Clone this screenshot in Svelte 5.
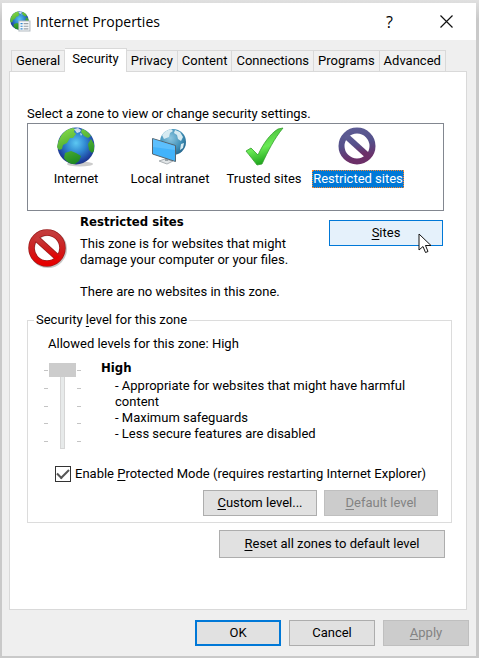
<script>
  const tabs = ["General", "Security", "Privacy", "Content", "Connections", "Programs", "Advanced"];
  const zones = [
    { id: "internet", name: "Internet" },
    { id: "intranet", name: "Local intranet" },
    { id: "trusted", name: "Trusted sites" },
    { id: "restricted", name: "Restricted sites" },
  ];

  let activeTab = "Security";
  let activeZone = "restricted";
  let level = 4;
  let protectedMode = true;
</script>

<svg class="defs" width="0" height="0" aria-hidden="true">
  <defs>
    <radialGradient id="sea" cx="0.5" cy="0.42" r="0.6">
      <stop offset="0" stop-color="#5cc8f2" />
      <stop offset="0.45" stop-color="#2f86d0" />
      <stop offset="0.85" stop-color="#1e3f9c" />
      <stop offset="1" stop-color="#1b2f78" />
    </radialGradient>
    <radialGradient id="pale" cx="0.4" cy="0.35" r="0.7">
      <stop offset="0" stop-color="#8cc6e0" />
      <stop offset="0.6" stop-color="#4393ba" />
      <stop offset="1" stop-color="#24658c" />
    </radialGradient>
    <linearGradient id="land" x1="0" y1="0" x2="0.4" y2="1">
      <stop offset="0" stop-color="#8ee04a" />
      <stop offset="1" stop-color="#1f8a22" />
    </linearGradient>
    <linearGradient id="tick" x1="0" y1="0" x2="0.3" y2="1">
      <stop offset="0" stop-color="#3fae35" />
      <stop offset="0.6" stop-color="#6aea55" />
      <stop offset="1" stop-color="#1fa51c" />
    </linearGradient>
    <linearGradient id="red" x1="0" y1="0" x2="0" y2="1">
      <stop offset="0" stop-color="#c43c3c" />
      <stop offset="0.5" stop-color="#cc2020" />
      <stop offset="1" stop-color="#e60000" />
    </linearGradient>
    <linearGradient id="purple" x1="0" y1="0" x2="0.2" y2="1">
      <stop offset="0" stop-color="#5d5c94" />
      <stop offset="0.5" stop-color="#54508a" />
      <stop offset="1" stop-color="#6c2f68" />
    </linearGradient>
    <symbol id="globe" viewBox="0 0 38 38">
      <circle cx="19" cy="19" r="18.5" fill="url(#sea)" />
      <path fill="url(#land)" d="M3 11C5 6 10 2 16 1l2 1-1 3 2 2-3 4-3 0-3 5-4 2-1 4-3 1-2-3C1 17 1 14 3 11zM25 2c4 1 7 4 9 7l-3 2-4-2-3-4zM34 12l3 5v7l-2 2-3-3-1-6zM8 26l6-2 5 2 5 3-2 5-4 3c-5 0-8-2-11-6z" />
      <path fill="#fff" opacity="0.75" d="M17 2l4-1 3 2-1 2-3 1zM23 6l2 1-1 2z" />
    </symbol>
    <symbol id="ban" viewBox="0 0 38 38">
      <circle cx="19" cy="19" r="15.5" />
      <path d="M8 9l22 20" />
    </symbol>
  </defs>
</svg>

<div class="desktop">
  <main class="window">
    <header class="titlebar">
      <svg class="app-icon" viewBox="0 0 20 20" aria-hidden="true">
        <use href="#globe" width="18" height="18" />
        <path d="M8.500 9.500h10.500v9.500H8.500z" fill="#f6f8fa" stroke="#b4bcc2" />
        <path d="M10 12h2M10 14.500h2M10 17h2" stroke="#2f86d0" />
        <path d="M13 12h4.500M13 14.500h4.500M13 17h4.500" stroke="#98a0a8" />
      </svg>
      <h1>Internet Properties</h1>
      <button class="caption" aria-label="Help">?</button>
      <button class="caption" aria-label="Close">
        <svg width="13" height="13" viewBox="0 0 13 13"><path d="M.5.5l12 12M12.500.5l-12 12" stroke="#111" stroke-width="1.200" /></svg>
      </button>
    </header>

    <div class="content">
      <div class="tabs" role="tablist">
        {#each tabs as tab}
          <button
            class="tab"
            class:active={tab === activeTab}
            role="tab"
            aria-selected={tab === activeTab}
            on:click={() => (activeTab = tab)}>{tab}</button>
        {/each}
      </div>

      <section class="panel">
        <p class="prompt">Select a zone to view or change security settings.</p>

        <div class="zones" role="listbox" aria-label="Zones">
          {#each zones as zone}
            <button
              class="zone"
              class:selected={zone.id === activeZone}
              role="option"
              aria-selected={zone.id === activeZone}
              on:click={() => (activeZone = zone.id)}>
              <svg width="40" height="40" viewBox="0 0 40 40" aria-hidden="true">
                {#if zone.id === "internet"}
                  <ellipse cx="24" cy="37" rx="13" ry="2.500" fill="#ccc" />
                  <use href="#globe" x="1" y="0" width="38" height="38" />
                {:else if zone.id === "intranet"}
                  <circle cx="23" cy="15" r="13" fill="url(#pale)" />
                  <path fill="#d6ebf2" d="M12 8c2-3 5-5 9-6l2 2-3 2-1 4-5 2zM25 3l5 2 3 5-2 4-3-2-1-4-3-2zM31 17l3-1-1 5-3 2z" />
                  <path d="M9 34l6-2 8 2-6 3z" fill="#e1e5e7" stroke="#aab0b4" />
                  <path d="M15 29l3 1v4h-3z" fill="#9ba3a8" />
                  <path d="M2.500 11.500l23 7v16l-23-7.500z" fill="#42b3fb" stroke="#56656f" />
                  <path d="M3 12l22 7v4L3 20z" fill="#75cbff" opacity="0.500" />
                {:else if zone.id === "trusted"}
                  <path d="M2 24l5-3 7 7C19 17 26 7 34 2l5-1C30 12 24 24 18 37l-5 1C10 34 6 29 2 24z" fill="url(#tick)" stroke="#35a02d" stroke-width="0.800" />
                {:else}
                  <g fill="none" stroke="url(#purple)" stroke-width="6"><use href="#ban" x="0" y="0" width="38" height="38" /></g>
                {/if}
              </svg>
              <span>{zone.name}</span>
            </button>
          {/each}
        </div>

        <div class="details">
          <svg class="zone-icon" width="40" height="40" viewBox="0 0 40 40" aria-hidden="true">
            <circle cx="21" cy="21" r="16" fill="none" stroke="#c8c8c8" stroke-width="6" />
            <g fill="none" stroke="#9c1c1c" stroke-width="6.500"><use href="#ban" x="1" y="1" width="38" height="38" /></g>
            <g fill="none" stroke="url(#red)" stroke-width="5"><use href="#ban" x="1" y="1" width="38" height="38" /></g>
          </svg>
          <div class="description">
            <h2>Restricted sites</h2>
            <p>This zone is for websites that might damage your computer or your files.</p>
            <p>There are no websites in this zone.</p>
          </div>
          <div class="sites">
            <button class="btn hot"><u>S</u>ites</button>
            <svg class="pointer" width="14" height="21" viewBox="0 0 14 21" aria-hidden="true">
              <path d="M1 1v16l4-3.500 2.500 6 2.500-1-2.500-6H13z" fill="#fff" stroke="#111" />
            </svg>
          </div>
        </div>

        <fieldset>
          <legend>Security <u>l</u>evel for this zone</legend>
          <p class="allowed">Allowed levels for this zone: High</p>
          <div class="level">
            <div class="slider">
              <div class="ticks">{#each Array(5) as _}<i></i>{/each}</div>
              <input type="range" min="0" max="4" bind:value={level} disabled aria-label="Security level" />
              <div class="ticks">{#each Array(5) as _}<i></i>{/each}</div>
            </div>
            <div class="level-text">
              <h2>High</h2>
              <p>- Appropriate for websites that might have harmful content</p>
              <p>- Maximum safeguards</p>
              <p>- Less secure features are disabled</p>
            </div>
          </div>
          <label class="check">
            <input type="checkbox" bind:checked={protectedMode} />
            <span>Enable <u>P</u>rotected Mode (requires restarting Internet Explorer)</span>
          </label>
          <div class="row">
            <button class="btn"><u>C</u>ustom level...</button>
            <button class="btn" disabled><u>D</u>efault level</button>
          </div>
        </fieldset>

        <div class="row reset">
          <button class="btn wide"><u>R</u>eset all zones to default level</button>
        </div>
      </section>
    </div>

    <footer>
      <button class="btn default">OK</button>
      <button class="btn">Cancel</button>
      <button class="btn" disabled><u>A</u>pply</button>
    </footer>
  </main>
</div>

<style>
  :global(body) {
    background: #c9c9c9;
  }

  * {
    box-sizing: border-box;
  }

  .defs {
    position: absolute;
  }

  .desktop {
    padding: 3px 3px 2px 2px;
    background: linear-gradient(#e0e0e0, #c9c9c9 20px);
    font-family: Roboto, Tahoma, sans-serif;
    font-size: 13px;
    line-height: 16px;
    color: #000;
  }

  .window {
    background: #efefef;
  }

  button {
    font: inherit;
    color: inherit;
    padding: 0;
    border: 0;
    background: none;
    white-space: nowrap;
  }

  h1,
  h2,
  p {
    margin: 0;
  }

  h2 {
    font: bold 13px/16px "DejaVu Sans Condensed", Tahoma, sans-serif;
  }

  u {
    text-underline-offset: 2px;
  }

  .titlebar {
    display: flex;
    align-items: center;
    height: 37px;
    padding: 0 1px 0 8px;
    background: #fff;
  }

  .app-icon {
    width: 21px;
    height: 21px;
  }

  h1 {
    flex: 1;
    margin-left: 5px;
    font: 14px/20px "Open Sans", "Segoe UI", sans-serif;
  }

  .caption {
    display: flex;
    align-items: center;
    justify-content: center;
    width: 57px;
    height: 37px;
    font: 16px/20px "Open Sans", "Segoe UI", sans-serif;
  }

  .content {
    padding: 8px 9px 0 7px;
  }

  .tabs {
    display: flex;
    align-items: flex-end;
    padding-left: 2px;
  }

  .tab {
    height: 21px;
    padding: 0 4px;
    border: 1px solid #d9d9d9;
    border-width: 1px 1px 0 0;
    background: #f0f0f0;
  }

  .tab:first-child {
    border-left-width: 1px;
  }

  .tab.active {
    height: 24px;
    margin-bottom: -1px;
    padding: 0 7px 3px;
    background: #fff;
  }

  .panel {
    padding: 34px 14px 51px 17px;
    border: 1px solid #d9d9d9;
    background: #fff;
  }

  .prompt {
    margin-bottom: 1px;
  }

  .zones {
    display: flex;
    height: 88px;
    margin-right: 8px;
    padding: 3px 1px;
    border: 1px solid #828790;
  }

  .zone {
    display: flex;
    flex-direction: column;
    align-items: center;
    gap: 3px;
    width: 94px;
  }

  .zone span {
    border: 1px solid transparent;
  }

  .zone.selected span {
    border: 1px dotted #ff8728;
    background: #0078d7;
    color: #fff;
  }

  .details {
    display: flex;
    padding-top: 3px;
  }

  .zone-icon {
    margin: 14px 13px 0 0;
  }

  .description {
    flex: 1;
  }

  .description h2 {
    margin-bottom: 6px;
  }

  .description p + p {
    margin-top: 16px;
  }

  .sites {
    position: relative;
    margin: 6px 9px 0 24px;
  }

  .btn {
    width: 114px;
    height: 26px;
    border: 1px solid #adadad;
    background: #e1e1e1;
  }

  .btn:disabled {
    border-color: #bfbfbf;
    background: #ccc;
    color: #838383;
  }

  .btn.hot {
    border-color: #0078d7;
    background: #e5f1fb;
  }

  .btn.default {
    border: 2px solid #0078d7;
  }

  .btn.wide {
    width: 226px;
    height: 28px;
  }

  .pointer {
    position: absolute;
    right: 11px;
    top: 13px;
  }

  fieldset {
    min-width: 0;
    margin: 12px 0 0;
    padding: 8px 13px 6px 16px;
    border: 1px solid #dcdcdc;
  }

  legend {
    margin-left: -10px;
    padding: 0 2px;
  }

  .allowed {
    margin-left: 4px;
  }

  .level {
    display: flex;
    gap: 20px;
    margin-top: 8px;
  }

  .slider {
    display: flex;
    gap: 1px;
    height: 86px;
    margin-top: 3px;
  }

  .slider input {
    appearance: none;
    writing-mode: vertical-lr;
    direction: rtl;
    width: 27px;
    height: 86px;
    margin: 0;
    background: none;
  }

  .slider input::-webkit-slider-runnable-track {
    width: 5px;
    height: 86px;
    background: #e7eaea;
    box-shadow: inset 0 0 0 1px #d6d6d6;
  }

  .slider input::-webkit-slider-thumb {
    appearance: none;
    width: 27px;
    height: 14px;
    margin-left: -11px;
    background: #ccc;
  }

  .ticks {
    display: flex;
    flex-direction: column;
    justify-content: space-between;
    padding: 7px 0;
  }

  .ticks i {
    width: 4px;
    height: 1px;
    background: #c4c4c4;
  }

  .level-text {
    padding-right: 20px;
  }

  .level-text h2 {
    margin-bottom: 2px;
  }

  .level-text p {
    margin-left: 14px;
  }

  .check {
    display: flex;
    align-items: center;
    gap: 4px;
    margin: 17px 0 8px 11px;
    white-space: nowrap;
  }

  .check input {
    appearance: none;
    display: grid;
    place-items: center;
    width: 16px;
    height: 16px;
    margin: 0;
    border: 1px solid #333;
    background: #fff;
  }

  .check input:checked::before {
    content: "";
    width: 10px;
    height: 5px;
    margin-bottom: 4px;
    border: solid #555;
    border-width: 0 0 2px 2px;
    transform: rotate(-45deg);
  }

  .row {
    display: flex;
    justify-content: flex-end;
    gap: 7px;
  }

  .reset {
    margin: 7px 7px 0 0;
  }

  footer {
    display: flex;
    justify-content: flex-end;
    gap: 8px;
    padding: 10px 7px;
  }

  footer .btn {
    width: 86px;
  }
</style>
